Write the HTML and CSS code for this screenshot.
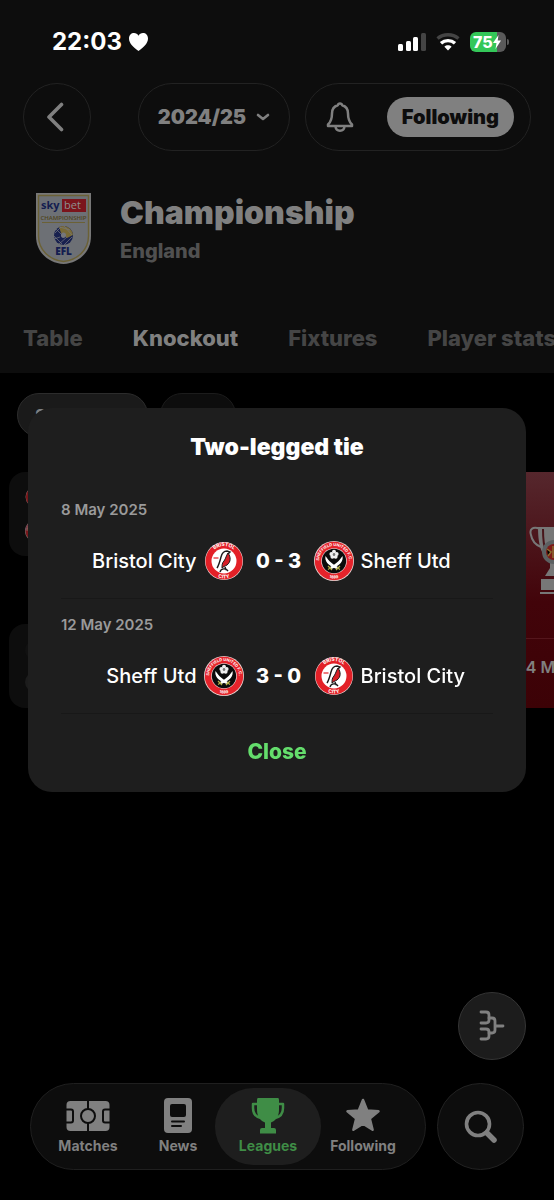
FILE: index.html
```html
<!DOCTYPE html>
<html lang="en">
<head>
    <meta charset="UTF-8">
    <meta name="viewport" content="width=device-width, initial-scale=1">
    <title>Championship</title>
    <link rel="stylesheet" href="styles.css">
</head>
<body>

<!-- shared club crests -->
<svg width="0" height="0" class="defs" aria-hidden="true">
    <defs>
        <path id="arc-top" d="M5 20a15 15 0 0 1 30 0"/>
        <path id="arc-bottom" d="M2.500 20a17.500 17.500 0 0 0 35 0"/>
        <symbol id="bristol" viewBox="0 0 40 40">
            <circle cx="20" cy="20" r="19" fill="#f0d9d9"/>
            <circle cx="20" cy="20" r="18.500" fill="#e32027"/>
            <circle cx="20" cy="20" r="12.500" fill="#fff"/>
            <text class="crest-text"><textPath href="#arc-top" startOffset="50%">BRISTOL</textPath></text>
            <text class="crest-text"><textPath href="#arc-bottom" startOffset="50%">CITY</textPath></text>
            <path d="M13 27c2-3 3-7 4-11 1-4 3-6 6-6l3 1-2 2" fill="none" stroke="#1b1b1b" stroke-width="1.400"/>
            <path d="M24 12c3 4 3 9-1 12-2 1-4 2-5 3 0-3 0-5 2-7 2-3 2-5 4-8z" fill="#d71f27" stroke="#1b1b1b" stroke-width="1"/>
            <path d="M16 31c1-4 6-4 8-1M21 26l1 3" fill="none" stroke="#1b1b1b" stroke-width="1.400"/>
            <path d="M9.500 17h5" stroke="#e32027" stroke-width="1.200"/>
        </symbol>
        <symbol id="sheffield" viewBox="0 0 40 40">
            <circle cx="20" cy="20" r="20" fill="#e9d3d0"/>
            <circle cx="20" cy="20" r="19.200" fill="#e5232b"/>
            <circle cx="20" cy="20" r="12.800" fill="#f2e6e6"/>
            <circle cx="20" cy="20" r="12.200" fill="#0b0b0b"/>
            <text class="crest-text crest-text-small"><textPath href="#arc-top" startOffset="50%">SHEFFIELD UNITED F.C.</textPath></text>
            <text class="crest-text crest-text-small"><textPath href="#arc-bottom" startOffset="50%">1889</textPath></text>
            <g fill="#eee">
                <circle cx="20" cy="10.800" r="2"/>
                <circle cx="17.400" cy="12.900" r="2"/>
                <circle cx="22.600" cy="12.900" r="2"/>
                <circle cx="18.400" cy="15.800" r="2"/>
                <circle cx="21.600" cy="15.800" r="2"/>
            </g>
            <circle cx="20" cy="13.600" r="1.300" fill="#777"/>
            <path d="M11.500 15c-1 5 2 9 11 13l1.500-2c-6-3-9-6-12.500-11z" fill="#fff"/>
            <path d="M28.500 15c1 5-2 9-11 13l-1.500-2c6-3 9-6 12.500-11z" fill="#fff"/>
            <path d="M14 25l4 4M26 25l-4 4M14 28.500l3-2M26 28.500l-3-2" stroke="#b7b24a" stroke-width="1.200"/>
        </symbol>
    </defs>
</svg>

<div class="app">
    <header class="header">
        <div class="status">
            <span class="time">22:03
                <svg width="21" height="20" viewBox="0 0 21 20"><path d="M10.500 19C5 15 1 11 1 6.500 1 3 3.300 1 6 1c2 0 3.600 1 4.500 2.700C11.400 2 13 1 15 1c2.700 0 5 2 5 5.500C20 11 16 15 10.500 19z" fill="#fff"/></svg>
            </span>
            <span class="status-icons">
                <svg width="28" height="18" viewBox="0 0 28 18">
                    <rect x="0" y="11" width="5" height="7" rx="1.500" fill="#fff"/>
                    <rect x="8" y="8" width="5" height="10" rx="1.500" fill="#fff"/>
                    <rect x="15" y="4" width="5" height="14" rx="1.500" fill="#fff"/>
                    <rect x="23" y="0" width="5" height="18" rx="1.500" fill="#444"/>
                </svg>
                <svg width="24" height="18" viewBox="0 0 24 18" fill="none" stroke-width="3.400">
                    <path d="M1.500 5.500c6-5 15-5 21 0" stroke="#444"/>
                    <path d="M5 10.300c4-3.600 10-3.600 14 0" stroke="#fff"/>
                    <path d="M12 17.500l-3.600-3.800c2-1.800 5.200-1.800 7.200 0z" fill="#fff"/>
                </svg>
                <span class="battery">
                    <span>75</span>
                    <svg width="8" height="14" viewBox="0 0 8 14"><path d="M5.500 0L0 8h3.500L2.500 14 8 5.500H4.700z" fill="#fff"/></svg>
                </span>
            </span>
        </div>

        <div class="toolbar">
            <button class="glass back" aria-label="Back">
                <svg width="18" height="30" viewBox="0 0 18 30"><path d="M15.500 2.500L3 15l12.500 12.500" fill="none" stroke="#808080" stroke-width="3.600" stroke-linecap="round" stroke-linejoin="round"/></svg>
            </button>
            <button class="glass season">2024/25
                <svg width="14" height="8" viewBox="0 0 14 8"><path d="M2 2l5 4 5-4" fill="none" stroke="#808080" stroke-width="2.600" stroke-linecap="round" stroke-linejoin="round"/></svg>
            </button>
            <div class="glass actions">
                <button class="bell" aria-label="Notifications">
                    <svg width="28" height="32" viewBox="0 0 28 32" fill="none" stroke="#808080" stroke-width="2.500" stroke-linejoin="round">
                        <path d="M14 2.500c-1.600 0-2 1-2.200 1.800C7.500 5.500 6 8.500 6 12.500c0 6-1.200 8.500-4 11V25h24v-1.500c-2.800-2.500-4-5-4-11 0-4-1.500-7-5.800-8.200-.2-.8-.6-1.800-2.200-1.800z"/>
                        <path d="M9.500 25.500c.5 5.500 8.500 5.500 9 0"/>
                    </svg>
                </button>
                <button class="follow">Following</button>
            </div>
        </div>

        <div class="league">
            <svg class="league-logo" width="55" height="71" viewBox="0 0 55 71">
                <path d="M0 0h55v43c0 16-12 27-27.500 28C12 70 0 59 0 43z" fill="#777"/>
                <path d="M2.500 2.500h50V43c0 14-11 24-25 25.500C13.500 67 2.500 57 2.500 43z" fill="#6d7075" stroke="#6b6136" stroke-width="1.400"/>
                <rect x="26" y="6" width="24" height="13" fill="#7b151c"/>
                <text x="5" y="16" class="logo-sky">sky</text>
                <text x="28" y="16" class="logo-bet">bet</text>
                <text x="27.500" y="27" class="logo-league">CHAMPIONSHIP</text>
                <path d="M6 29.500h43" stroke="#6b6136"/>
                <circle cx="27.500" cy="42.500" r="9.500" fill="#18214f"/>
                <path d="M23 34c6-3 13 1 14 8l-6 3-6-5z" fill="#786a37"/>
                <path d="M26 40c2-1 4 0 4 2s-1 3-3 3-3-4-1-5z" fill="#75777c"/>
                <path d="M20 36l5 5M18 43l8 8M28 33l8 9M24 34l10 3M18 46l6-2M23 51l8-7M28 52l8-8M19 40l6-6" stroke="#75777c" stroke-width=".7"/>
                <text x="27.500" y="61.500" class="logo-efl">EFL</text>
            </svg>
            <div>
                <h1>Championship</h1>
                <p>England</p>
            </div>
        </div>

        <nav class="tabs">
            <a href="#">Table</a>
            <a href="#" class="active">Knockout</a>
            <a href="#">Fixtures</a>
            <a href="#">Player stats</a>
        </nav>
    </header>

    <main class="main">
        <div class="chips">
            <button class="chip active">Semi-finals</button>
            <button class="chip">Final</button>
        </div>
        <div class="bracket">
            <div class="round">
                <div class="tie">
                    <svg class="mini"><use href="#bristol"/></svg>
                    <svg class="mini"><use href="#sheffield"/></svg>
                </div>
                <div class="tie">
                    <span class="dot"></span>
                    <span class="dot light"></span>
                </div>
            </div>
            <div class="final">
                <div class="cup">
                    <svg width="50" height="70" viewBox="0 0 50 70">
                        <path d="M11 3C4 0 0 3 2 9c1 6 5 10 10 12M39 3c7-3 11 0 9 6-1 6-5 10-10 12" fill="none" stroke="#777" stroke-width="2"/>
                        <path d="M9 1h32c0 20-4 29-12 33v8l5 8H16l5-8v-8C13 30 9 21 9 1z" fill="#777"/>
                        <path d="M14 3c0 12 1 18 3 22" fill="none" stroke="#48151a" stroke-width="2"/>
                        <path d="M12 53h26v11H12zM11 66h28v2H11z" fill="#777"/>
                        <circle cx="25" cy="26" r="12" fill="#5c6062"/>
                        <circle cx="25" cy="26" r="8" fill="#7c1b18"/>
                        <path d="M18 23l4 3-3 4M24 20v12" stroke="#8a6d30" stroke-width="1.500"/>
                    </svg>
                </div>
                <div class="final-date">24 May</div>
            </div>
        </div>
        <button class="fab" aria-label="Bracket view">
            <svg width="26" height="32" viewBox="0 0 26 32" fill="none" stroke="#808080" stroke-width="2.800" stroke-linejoin="round" stroke-linecap="round">
                <path d="M2 2h5q3 0 3 3v5q0 3-3 3H2M2 19h5q3 0 3 3v4q0 3-3 3H2"/>
                <path d="M10 8h3q3 0 3 3v9q0 3-3 3h-3M16 16h8"/>
            </svg>
        </button>
    </main>

    <footer class="footer">
        <nav class="tabbar">
            <a href="#">
                <svg width="44" height="36" viewBox="0 0 44 36">
                    <rect x="0.500" y="3" width="43" height="30" rx="4" fill="#808080"/>
                    <g fill="none" stroke="#0d0d0d" stroke-width="2">
                        <path d="M22 3v8M22 25v8M0 11.500h5q2 0 2 2v9q0 2-2 2H0M44 11.500h-5q-2 0-2 2v9q0 2 2 2h5"/>
                        <circle cx="22" cy="18" r="7"/>
                    </g>
                </svg>
                Matches
            </a>
            <a href="#">
                <svg width="28" height="36" viewBox="0 0 28 36">
                    <rect x="0" y="0" width="28" height="35" rx="4" fill="#808080"/>
                    <rect x="6" y="6" width="16" height="13" rx="2" fill="#0d0d0d"/>
                    <path d="M8 23.500h12M8 28h9" stroke="#0d0d0d" stroke-width="2" stroke-linecap="round"/>
                </svg>
                News
            </a>
            <a href="#" class="active">
                <svg width="34" height="36" viewBox="0 0 34 36">
                    <path d="M7 6H2v4c0 6 3 9 8 10M27 6h5v4c0 6-3 9-8 10" fill="none" stroke="#3f8d46" stroke-width="2.500" stroke-linejoin="round"/>
                    <path d="M7 0h20q1 0 1 2v10c0 7-4 11-8 12.500V30h3q2 0 2 2v3.500H9V32q0-2 2-2h3v-5.500C10 23 6 19 6 12V2q0-2 1-2z" fill="#3f8d46"/>
                </svg>
                Leagues
            </a>
            <a href="#">
                <svg width="36" height="36" viewBox="0 0 36 36"><path d="M18 2l4.200 10.500 11.300.8-8.700 7.200 2.800 11.300L18 25.600l-9.600 6.200 2.800-11.300-8.700-7.200 11.300-.8z" fill="#808080" stroke="#808080" stroke-width="2.500" stroke-linejoin="round"/></svg>
                Following
            </a>
        </nav>
        <button class="glass search" aria-label="Search">
            <svg width="34" height="34" viewBox="0 0 34 34" fill="none" stroke="#808080" stroke-linecap="round">
                <circle cx="14" cy="14" r="11.500" stroke-width="3.600"/>
                <path d="M23 23l7 7" stroke-width="5.500"/>
            </svg>
        </button>
    </footer>
</div>

<div class="overlay">
    <div class="modal" role="dialog" aria-labelledby="modal-title">
        <h2 id="modal-title">Two-legged tie</h2>
        <div class="leg">
            <div class="date">8 May 2025</div>
            <div class="match">
                <span class="home">Bristol City</span>
                <svg class="crest"><use href="#bristol"/></svg>
                <strong>0 - 3</strong>
                <svg class="crest"><use href="#sheffield"/></svg>
                <span>Sheff Utd</span>
            </div>
        </div>
        <div class="leg">
            <div class="date">12 May 2025</div>
            <div class="match">
                <span class="home">Sheff Utd</span>
                <svg class="crest"><use href="#sheffield"/></svg>
                <strong>3 - 0</strong>
                <svg class="crest"><use href="#bristol"/></svg>
                <span>Bristol City</span>
            </div>
        </div>
        <button class="close">Close</button>
    </div>
</div>

</body>
</html>
```
FILE: styles.css
```css
* {
    margin: 0;
    padding: 0;
    box-sizing: border-box;
}

body {
    background: #000;
    color: #fff;
    font-family: Inter, "Liberation Sans", sans-serif;
}

button {
    border: 0;
    background: none;
    color: inherit;
    font: inherit;
    cursor: pointer;
}

a {
    color: inherit;
    text-decoration: none;
}

svg {
    display: block;
    flex: none;
}

.defs {
    position: absolute;
}

.app {
    min-height: 100vh;
    display: flex;
    flex-direction: column;
    overflow: hidden;
}

/* header */
.header {
    background: #0d0d0d;
}

.status {
    height: 83px;
    padding: 0 48px 0 52px;
    display: flex;
    align-items: center;
    justify-content: space-between;
}

.time {
    display: flex;
    align-items: center;
    gap: 6px;
    font-size: 24px;
    font-weight: 700;
}

.status-icons {
    display: flex;
    align-items: center;
    gap: 10px;
}

.battery {
    position: relative;
    width: 36px;
    height: 20px;
    padding-left: 3px;
    display: flex;
    align-items: center;
    border-radius: 6px;
    background: linear-gradient(90deg, #34c759 75%, #5a5a5a 75%);
    font-size: 16px;
    font-weight: 800;
}

.battery::after {
    content: "";
    position: absolute;
    right: -3px;
    top: 7px;
    width: 2px;
    height: 6px;
    border-radius: 0 2px 2px 0;
    background: #5a5a5a;
}

.toolbar {
    padding: 0 23px;
    display: flex;
    gap: 15px;
}

.glass {
    height: 68px;
    display: flex;
    align-items: center;
    justify-content: center;
    border: 1px solid #222;
    border-radius: 44px;
    background: #0d0d0d;
}

.back {
    width: 68px;
    margin-right: auto;
    padding-right: 4px;
}

.season {
    width: 152px;
    gap: 10px;
    color: #808080;
    font-size: 20px;
    font-weight: 900;
}

.actions {
    width: 226px;
    padding: 0 16px 0 20px;
    justify-content: space-between;
}

.follow {
    height: 40px;
    padding: 0 15px;
    border-radius: 20px;
    background: #808080;
    color: #0d0d0d;
    font-size: 20px;
    font-weight: 900;
}

.league {
    padding: 42px 36px 0;
    display: flex;
    gap: 29px;
}

.league h1 {
    color: #808080;
    font-size: 32px;
    font-weight: 900;
    line-height: 40px;
}

.league p {
    margin-top: 6px;
    color: #505050;
    font-size: 20px;
    font-weight: 800;
    line-height: 24px;
}

.logo-sky,
.logo-bet {
    font: 700 11px "Open Sans", sans-serif;
    fill: #141d50;
}

.logo-bet {
    font-weight: 400;
    fill: #8f8f8f;
}

.logo-league {
    font: 600 6px "Open Sans", sans-serif;
    fill: #4f4520;
    text-anchor: middle;
}

.logo-efl {
    font: 800 10px "Open Sans", sans-serif;
    fill: #141d50;
    text-anchor: middle;
}

.tabs {
    padding: 62px 23px 23px;
    display: flex;
    gap: 50px;
    color: #454545;
    font-size: 22px;
    font-weight: 800;
    line-height: 24px;
    white-space: nowrap;
}

.tabs .active {
    color: #808080;
}

/* bracket */
.main {
    flex: 1;
    padding-top: 20px;
    display: flex;
    flex-direction: column;
}

.chips {
    padding: 0 17px;
    display: flex;
    gap: 12px;
}

.chip {
    height: 44px;
    padding: 1px 17px 0;
    border: 1px solid #1c1c1c;
    border-radius: 22px;
    background: #0d0d0d;
    color: #555;
    font-size: 17px;
    font-weight: 700;
}

.chip.active {
    border-color: #2c2c2c;
    background: #1a1a1a;
    color: #808080;
}

.bracket {
    margin: 35px -50px 0 9px;
    display: flex;
    gap: 24px;
}

.round {
    flex: 1;
    display: flex;
    flex-direction: column;
    gap: 68px;
}

.tie {
    height: 84px;
    padding-left: 16px;
    display: flex;
    flex-direction: column;
    justify-content: center;
    gap: 12px;
    border-radius: 16px;
    background: #0d0d0d;
}

.mini {
    width: 22px;
    height: 22px;
    opacity: .5;
}

.dot {
    width: 20px;
    height: 20px;
    border-radius: 50%;
    background: #111;
}

.dot.light {
    background: #1c1c1c;
}

.final {
    width: 101px;
    background: linear-gradient(#56272d, #42040a 55%, #3c0206);
}

.cup {
    height: 167px;
    padding-top: 54px;
    display: flex;
    justify-content: center;
    border-bottom: 1px solid #54161c;
}

.final-date {
    padding: 16px 13px 0;
    color: #808080;
    font-size: 16px;
    font-weight: 600;
    line-height: 24px;
}

.fab {
    width: 68px;
    height: 68px;
    margin: auto 28px 23px auto;
    display: flex;
    align-items: center;
    justify-content: center;
    border: 1px solid #343434;
    border-radius: 50%;
    background: #1c1c1c;
}

/* bottom bar */
.footer {
    padding: 0 30px 30px;
    display: flex;
    gap: 11px;
}

.tabbar {
    flex: 1;
    height: 87px;
    padding: 4px 12px;
    display: flex;
    border: 1px solid #1f1f1f;
    border-radius: 44px;
    background: #0d0d0d;
    color: #808080;
    font-size: 14px;
    font-weight: 700;
    line-height: 20px;
}

.tabbar a {
    flex: 9;
    display: flex;
    flex-direction: column;
    align-items: center;
    justify-content: center;
    gap: 2px;
}

.tabbar a:last-child {
    flex: 10;
}

.tabbar .active {
    margin: 0 -8px;
    flex: 9 0 16px;
    border-radius: 38px;
    background: #1e1e1e;
    color: #3f8d46;
}

.search {
    width: 87px;
    height: 87px;
}

/* modal */
.overlay {
    position: fixed;
    inset: 0;
    padding: 0 28px;
    display: flex;
    align-items: center;
}

.modal {
    flex: 1;
    padding: 0 33px;
    border-radius: 24px;
    background: #1e1e1e;
    text-align: center;
}

.modal h2 {
    padding: 24px 0 22px;
    font-size: 23px;
    font-weight: 900;
    line-height: 30px;
}

.leg {
    height: 115px;
    padding-top: 16px;
    border-bottom: 1px solid #181818;
}

.date {
    color: #9a9a9a;
    font-size: 15px;
    font-weight: 600;
    line-height: 20px;
    text-align: left;
}

.match {
    margin-top: 21px;
    padding-left: 3px;
    display: grid;
    grid-template-columns: 1fr 40px 70px 40px 1fr;
    align-items: center;
    font-size: 20px;
    font-weight: 500;
    text-align: left;
}

.match strong {
    font-weight: 800;
    text-align: center;
}

.match .home {
    text-align: right;
}

.match span {
    padding: 0 7px;
}

.crest {
    width: 40px;
    height: 40px;
}

.crest-text {
    font: 700 5px Inter, sans-serif;
    fill: #fff;
    text-anchor: middle;
}

.crest-text-small {
    font-size: 4px;
}

.close {
    height: 78px;
    padding: 0 24px 4px;
    color: #64dd6c;
    font-size: 21px;
    font-weight: 800;
}
```
